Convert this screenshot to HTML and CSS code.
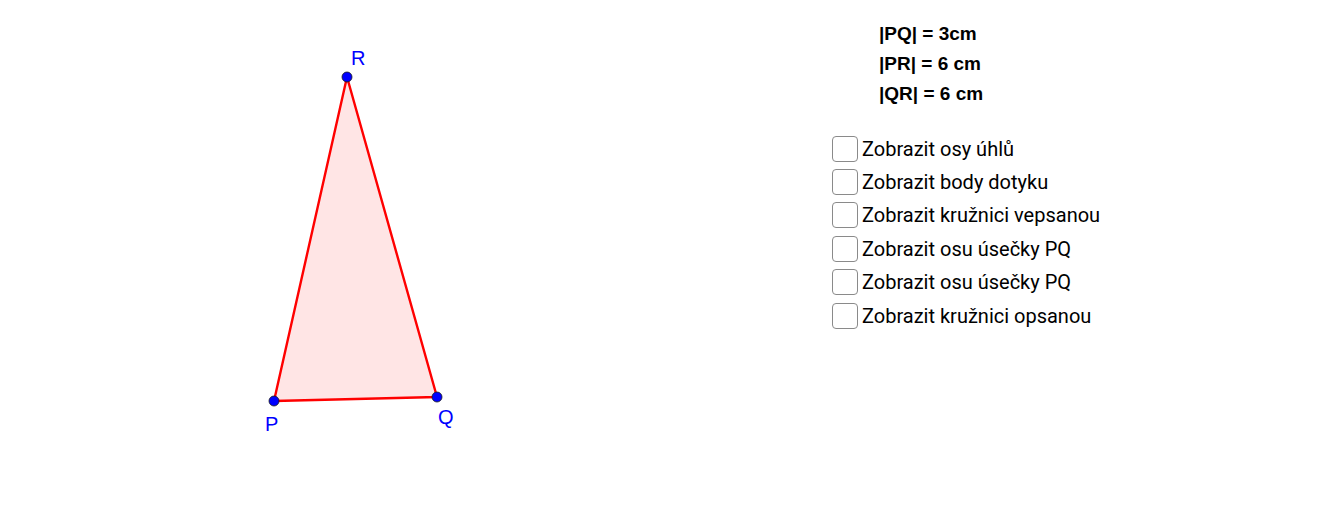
FILE: index.html
```html
<!DOCTYPE html>
<html>
<head>
<meta charset="utf-8">
<link rel="stylesheet" href="styles.css">
</head>
<body>
<div class="applet">
  <svg class="canvas" width="832" height="523" viewBox="0 0 832 523">
    <polygon points="274,401 437,397 347,77" fill="#ffe5e5" stroke="none"/>
    <polyline points="274,401 437,397 347,77 274,401" fill="none" stroke="#ff0000" stroke-width="2.4" stroke-linejoin="round"/>
    <circle cx="347" cy="77" r="5" fill="#0000ff" stroke="#1a1a1a" stroke-width="0.8"/>
    <circle cx="274" cy="401" r="5" fill="#0000ff" stroke="#1a1a1a" stroke-width="0.8"/>
    <circle cx="437" cy="397" r="5" fill="#0000ff" stroke="#1a1a1a" stroke-width="0.8"/>
    <text class="lbl" x="351" y="65">R</text>
    <text class="lbl" x="265" y="431">P</text>
    <text class="lbl" x="438" y="424">Q</text>
  </svg>
  <div class="panel">
    <div class="measures">
      <div class="m">|PQ| = 3cm</div>
      <div class="m">|PR| = 6 cm</div>
      <div class="m">|QR| = 6 cm</div>
    </div>
    <div class="checks">
      <label class="row"><span class="box"></span><span class="txt">Zobrazit osy úhlů</span></label>
      <label class="row"><span class="box"></span><span class="txt">Zobrazit body dotyku</span></label>
      <label class="row"><span class="box"></span><span class="txt">Zobrazit kružnici vepsanou</span></label>
      <label class="row"><span class="box"></span><span class="txt">Zobrazit osu úsečky PQ</span></label>
      <label class="row"><span class="box"></span><span class="txt">Zobrazit osu úsečky PQ</span></label>
      <label class="row"><span class="box"></span><span class="txt">Zobrazit kružnici opsanou</span></label>
    </div>
  </div>
</div>
</body>
</html>
```
FILE: styles.css
```css
html, body {
  margin: 0;
  padding: 0;
  background: #ffffff;
}
.applet {
  width: 1341px;
  height: 523px;
  display: flex;
  flex-direction: row;
  overflow: hidden;
}
.canvas {
  display: block;
  flex: 0 0 auto;
}
.lbl {
  font-family: "Liberation Sans", Arial, sans-serif;
  font-size: 20px;
  fill: #0000ff;
}
.panel {
  display: flex;
  flex-direction: column;
  padding-top: 19px;
}
.measures {
  margin-left: 47px;
  display: flex;
  flex-direction: column;
}
.m {
  font-family: "Liberation Sans", Arial, sans-serif;
  font-weight: bold;
  font-size: 19px;
  line-height: 30px;
  color: #000;
}
.checks {
  margin-top: 23px;
  display: flex;
  flex-direction: column;
}
.row {
  height: 33.4px;
  display: flex;
  align-items: center;
  gap: 4px;
}
.box {
  width: 24px;
  height: 24px;
  border: 1px solid #8a8a8a;
  border-radius: 4px;
  background: #fff;
  flex: 0 0 auto;
}
.txt {
  font-family: Roboto, "Noto Sans", sans-serif;
  font-size: 20px;
  color: #000;
}
```
